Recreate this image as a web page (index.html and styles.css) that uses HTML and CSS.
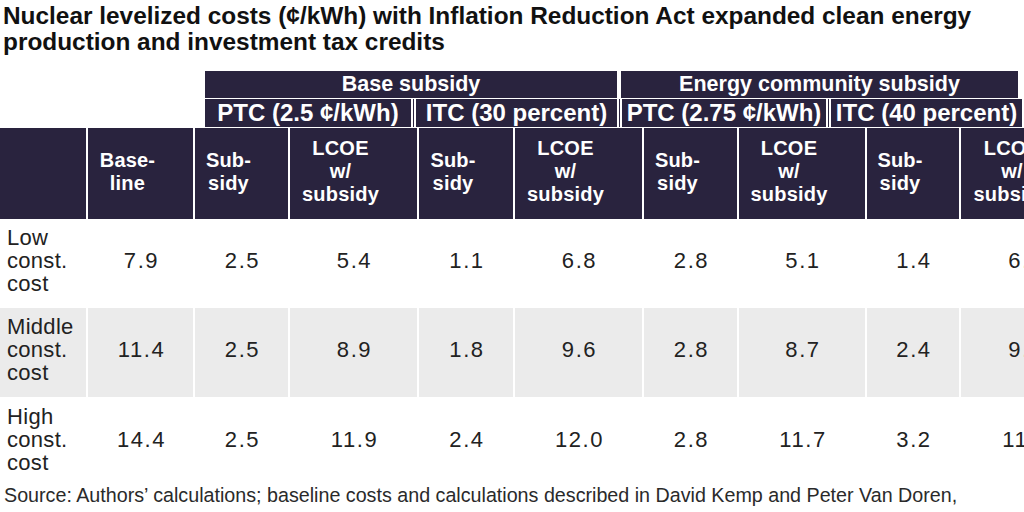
FILE: index.html
```html
<!DOCTYPE html>
<html lang="en">
<head>
<meta charset="utf-8">
<title>Nuclear levelized costs</title>
<link rel="stylesheet" href="styles.css">
</head>
<body>
<div class="page">
  <h1 class="title">Nuclear levelized costs (¢/kWh) with Inflation Reduction Act expanded clean energy<br>production and investment tax credits</h1>

  <div class="groups">
    <div class="group-row top">
      <div class="g g-base">Base subsidy</div>
      <div class="g g-energy">Energy community subsidy</div>
    </div>
    <div class="group-row sub">
      <div class="g s1">PTC (2.5 ¢/kWh)</div>
      <div class="g sep s2">ITC (30 percent)</div>
      <div class="g sep s3">PTC (2.75 ¢/kWh)</div>
      <div class="g sep s4">ITC (40 percent)</div>
    </div>
  </div>

  <div class="grid">
    <div class="hd first"></div>
    <div class="hd"><span>Base-<br>line</span></div>
    <div class="hd"><span>Sub-<br>sidy</span></div>
    <div class="hd"><span>LCOE<br>w/<br>subsidy</span></div>
    <div class="hd"><span>Sub-<br>sidy</span></div>
    <div class="hd"><span>LCOE<br>w/<br>subsidy</span></div>
    <div class="hd"><span>Sub-<br>sidy</span></div>
    <div class="hd"><span>LCOE<br>w/<br>subsidy</span></div>
    <div class="hd"><span>Sub-<br>sidy</span></div>
    <div class="hd"><span>LCOE<br>w/<br>subsidy</span></div>

    <div class="lbl r1">Low<br>const.<br>cost</div>
    <div class="val r1">7.9</div>
    <div class="val r1">2.5</div>
    <div class="val r1">5.4</div>
    <div class="val r1">1.1</div>
    <div class="val r1">6.8</div>
    <div class="val r1">2.8</div>
    <div class="val r1">5.1</div>
    <div class="val r1">1.4</div>
    <div class="val r1">6.6</div>

    <div class="lbl r2 alt">Middle<br>const.<br>cost</div>
    <div class="val r2 alt">11.4</div>
    <div class="val r2 alt">2.5</div>
    <div class="val r2 alt">8.9</div>
    <div class="val r2 alt">1.8</div>
    <div class="val r2 alt">9.6</div>
    <div class="val r2 alt">2.8</div>
    <div class="val r2 alt">8.7</div>
    <div class="val r2 alt">2.4</div>
    <div class="val r2 alt">9.0</div>

    <div class="lbl r3">High<br>const.<br>cost</div>
    <div class="val r3">14.4</div>
    <div class="val r3">2.5</div>
    <div class="val r3">11.9</div>
    <div class="val r3">2.4</div>
    <div class="val r3">12.0</div>
    <div class="val r3">2.8</div>
    <div class="val r3">11.7</div>
    <div class="val r3">3.2</div>
    <div class="val r3">11.2</div>
  </div>

  <p class="source">Source: Authors’ calculations; baseline costs and calculations described in David Kemp and Peter Van Doren,</p>
</div>
</body>
</html>
```

FILE: styles.css
```css
html, body {
  margin: 0;
  padding: 0;
  background: #ffffff;
  overflow: hidden;
}

.page {
  width: 1024px;
  height: 512px;
  overflow: hidden;
  font-family: "Liberation Sans", Arial, sans-serif;
  color: #222222;
}

.title {
  margin: 0;
  padding: 3px 0 0 3px;
  font-size: 24.4px;
  line-height: 26px;
  font-weight: bold;
  color: #111111;
  white-space: nowrap;
}

.groups {
  margin-top: 16px;
  padding-left: 205px;
  display: flex;
  flex-direction: column;
  gap: 1px;
}

.group-row {
  display: flex;
}

.g {
  background: #29233e;
  color: #ffffff;
  font-weight: bold;
  text-align: center;
  white-space: nowrap;
  box-sizing: border-box;
}

.top .g {
  height: 27px;
  font-size: 21.5px;
  line-height: 27px;
}

.g-base { width: 412px; }
.g-energy { width: 397px; margin-left: 4px; }

.sub .g {
  height: 28px;
  font-size: 24px;
  line-height: 28px;
}

.sep {
  margin-left: 2px;
  border-left: 1px solid #29233e;
  padding-left: 2px;
  background: linear-gradient(90deg, #ffffff 2px, #29233e 2px);
}

.s1 { width: 206px; }
.s2 { width: 204px; }
.s3 { width: 207px; }
.s4 { width: 194px; }

.grid {
  margin-top: 1px;
  display: grid;
  grid-template-columns: 86px 107px 95px 129px 96px 129px 95px 128px 94px 130px;
  grid-template-rows: 91px 89px 89px 87px;
  width: 1089px;
}

.grid > div {
  box-sizing: border-box;
  border-left: 2px solid #ffffff;
  display: flex;
  align-items: center;
}

.grid > .hd.first,
.grid > .lbl {
  border-left: 0;
}

.hd {
  background: #29233e;
  color: #ffffff;
  font-weight: bold;
  font-size: 20px;
  line-height: 23px;
  letter-spacing: 0.2px;
  justify-content: center;
  text-align: center;
  padding: 0 26px 4px 0;
  white-space: nowrap;
}

.lbl {
  font-size: 22px;
  line-height: 23px;
  letter-spacing: 0.3px;
  padding: 0 0 6px 7px;
  justify-content: flex-start;
}

.val {
  font-size: 22px;
  line-height: 23px;
  letter-spacing: 1.6px;
  justify-content: center;
  padding: 0 0 6px 2px;
}

.r3 {
  padding-bottom: 3px;
}

.alt {
  background: #ebebeb;
}

.source {
  margin: 0;
  padding-left: 4px;
  font-size: 19.7px;
  line-height: 22px;
  color: #2a2a2a;
  white-space: nowrap;
}
```
